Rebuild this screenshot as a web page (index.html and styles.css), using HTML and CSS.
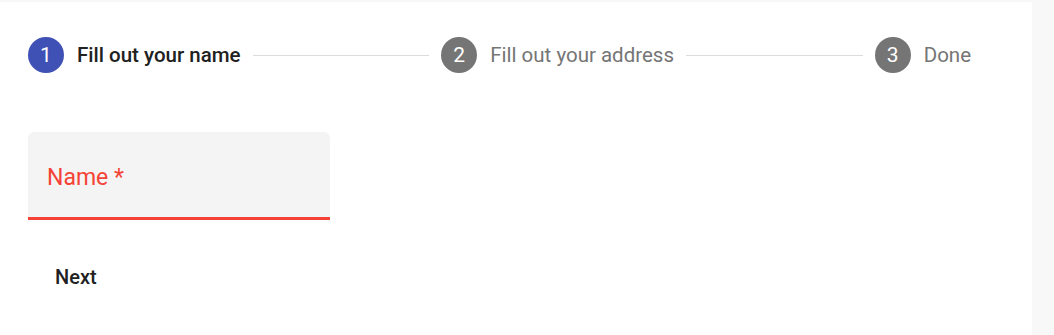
FILE: index.html
```html
<!DOCTYPE html>
<html>
    <head>
        <link rel="stylesheet" href="styles.css">
    </head>
    <body>
        <div class="page">
            <div class="stepper">
                <div class="step active">
                    <span class="icon">1</span>
                    <span class="label">Fill out your name</span>
                </div>
                <div class="line"></div>
                <div class="step">
                    <span class="icon">2</span>
                    <span class="label">Fill out your address</span>
                </div>
                <div class="line"></div>
                <div class="step">
                    <span class="icon">3</span>
                    <span class="label">Done</span>
                </div>
            </div>
            <div class="content">
                <div class="field">
                    <span class="field-label">Name *</span>
                </div>
                <button class="next">Next</button>
            </div>
        </div>
    </body>
</html>
```

FILE: styles.css
```css
body {
    margin: 0;
    background: #f8f8f8;
    font-family: Roboto, "Liberation Sans", sans-serif;
}
.page {
    width: 1032px;
    height: 333px;
    margin-top: 2px;
    background: #fff;
}
.stepper {
    display: flex;
    align-items: center;
    padding: 35px 61px 0 28px;
}
.step {
    display: flex;
    align-items: center;
}
.icon {
    width: 36px;
    height: 36px;
    border-radius: 50%;
    background: #757575;
    color: #fff;
    font-size: 21px;
    display: flex;
    align-items: center;
    justify-content: center;
}
.label {
    margin-left: 13px;
    font-size: 20.5px;
    color: #757575;
}
.step.active .icon {
    background: #3f51b5;
}
.step.active .label {
    color: #212121;
    font-weight: 500;
}
.line {
    flex: 1;
    height: 1px;
    background: #dcdcdc;
    margin: 0 12px;
}
.content {
    padding: 59px 0 0 28px;
}
.field {
    width: 302px;
    height: 85px;
    background: #f4f4f4;
    border-radius: 6px 6px 0 0;
    border-bottom: 3px solid #f44336;
}
.field-label {
    display: block;
    padding: 32px 0 0 19px;
    line-height: 28px;
    font-size: 23px;
    color: #f44336;
}
.next {
    margin-top: 31px;
    height: 52px;
    padding: 0 27px;
    border: none;
    background: none;
    font-family: inherit;
    font-size: 20px;
    font-weight: 500;
    color: #212121;
}
```
